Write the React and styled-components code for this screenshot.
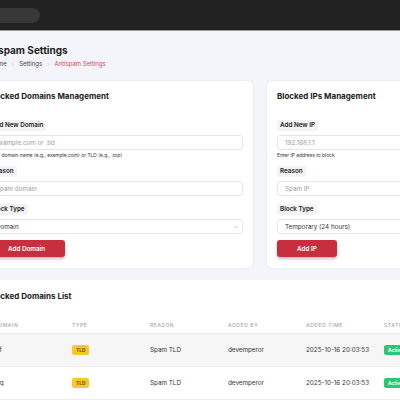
import React from 'react'
import styled, { createGlobalStyle } from 'styled-components'

const GlobalStyle = createGlobalStyle`
  html, body {
    margin: 0;
    padding: 0;
    background: #f4f5fb;
    font-family: Inter, "Noto Sans", sans-serif;
    overflow: hidden;
  }
`

const TopBar = styled.header`
  height: 30px;
  background: #222222;
  border-bottom: 1px solid #9a9a9a;
  display: flex;
  align-items: center;
`

const SearchPill = styled.div`
  width: 70px;
  height: 15px;
  margin-left: -30px;
  border-radius: 8px;
  background: #383838;
`

const Page = styled.main`
  margin-left: -22px;
  width: 700px;
  padding-top: 12px;
`

const Title = styled.h1`
  margin: 0 0 0 0;
  font-size: 10px;
  line-height: 14px;
  font-weight: 700;
  color: #1c1c1c;
`

const Crumbs = styled.nav`
  margin: 3px 0 0 12px;
  display: flex;
  align-items: center;
  gap: 5px;
  font-size: 6px;
  color: #444;
`

const Crumb = styled.span`
  color: ${p => (p.$active ? '#d2475a' : '#444')};
`

const Sep = styled.span`
  color: #c4c4c4;
  font-size: 6px;
`

const Cards = styled.div`
  margin-top: 14px;
  display: grid;
  grid-template-columns: 275px 275px;
  gap: 14px;
`

const Card = styled.section`
  background: #ffffff;
  border-radius: 6px;
  padding: 10px 10px 11px;
  box-shadow: 0 0 0 1px #eceef5;
`

const CardTitle = styled.h2`
  margin: 0;
  font-size: 8px;
  line-height: 11px;
  font-weight: 700;
  color: #1c1c1c;
`

const Field = styled.div`
  display: flex;
  flex-direction: column;
  align-items: flex-start;
  margin-top: ${p => p.$gap || 8}px;
`

const Label = styled.label`
  background: #f3f3f5;
  border-radius: 2px;
  padding: 1px 3px;
  font-size: 6.3px;
  line-height: 9px;
  font-weight: 600;
  color: #222;
  margin-bottom: 4px;
`

const Input = styled.div`
  box-sizing: border-box;
  width: 100%;
  height: 15px;
  border: 1px solid #e6e6ea;
  border-radius: 3px;
  padding: 0 3px 0 7px;
  display: flex;
  align-items: center;
  justify-content: space-between;
  font-size: 6.3px;
  color: ${p => (p.$value ? '#333' : '#9c9c9c')};
`

const Help = styled.div`
  margin-top: 2px;
  font-size: 4.9px;
  color: #333;
`

const Chevron = styled.svg`
  width: 6px;
  height: 6px;
  color: #999;
`

const Button = styled.button`
  margin-top: 6px;
  height: 17px;
  padding: 0 20px;
  border: none;
  border-radius: 3px;
  background: #c72f3e;
  color: #fff;
  font-family: inherit;
  font-size: 6.3px;
  font-weight: 600;
  box-shadow: 0 2px 3px rgba(0, 0, 0, 0.25);
`

const ListCard = styled.section`
  margin-top: 12px;
  width: 600px;
  background: #fff;
  border-radius: 6px;
  padding: 11px 10px 0;
`

const Table = styled.table`
  margin-top: 14px;
  border-collapse: collapse;
  table-layout: fixed;
  width: 468px;
`

const Th = styled.th`
  padding: 0 6px;
  height: 17px;
  text-align: left;
  font-size: 5px;
  font-weight: 500;
  letter-spacing: 0.6px;
  color: #a6a6a6;
  border-bottom: 1px solid #ececec;
  white-space: nowrap;
  vertical-align: middle;
`

const Tr = styled.tr`
  background: ${p => (p.$shade ? '#f6f6f6' : '#fff')};
`

const Td = styled.td`
  height: 32px;
  padding: 0 6px;
  font-size: 6.3px;
  color: #333;
  border-bottom: 1px solid #ececec;
  white-space: nowrap;
`

const Badge = styled.span`
  display: inline-block;
  padding: 2px 4px;
  border-radius: 2px;
  font-size: 4.8px;
  font-weight: 700;
  background: ${p => (p.$tone === 'green' ? '#2bc776' : '#f8c630')};
  color: ${p => (p.$tone === 'green' ? '#fff' : '#6b4e00')};
`

const rows = [
  { domain: '.cf', type: 'TLD', reason: 'Spam TLD', by: 'devemperor', time: '2025-10-16 20:03:53' },
  { domain: '.gq', type: 'TLD', reason: 'Spam TLD', by: 'devemperor', time: '2025-10-16 20:03:53' },
]

const SelectBox = ({ children }) => (
  <Input $value>
    <span>{children}</span>
    <Chevron viewBox="0 0 24 24" fill="none" stroke="currentColor" strokeWidth="2.5">
      <path d="M6 9l6 6 6-6" />
    </Chevron>
  </Input>
)

const App = () => {
  return (
    <>
      <GlobalStyle />
      <TopBar>
        <SearchPill />
      </TopBar>
      <Page>
        <Title>Antispam Settings</Title>
        <Crumbs>
          <Crumb>Home</Crumb>
          <Sep>›</Sep>
          <Crumb>Settings</Crumb>
          <Sep>›</Sep>
          <Crumb $active>Antispam Settings</Crumb>
        </Crumbs>

        <Cards>
          <Card>
            <CardTitle>Blocked Domains Management</CardTitle>
            <Field $gap={18}>
              <Label>Add New Domain</Label>
              <Input>example.com or .tld</Input>
              <Help>Enter domain name (e.g., example.com) or TLD (e.g., .top)</Help>
            </Field>
            <Field>
              <Label>Reason</Label>
              <Input>Spam domain</Input>
            </Field>
            <Field>
              <Label>Block Type</Label>
              <SelectBox>Domain</SelectBox>
            </Field>
            <Button>Add Domain</Button>
          </Card>

          <Card>
            <CardTitle>Blocked IPs Management</CardTitle>
            <Field $gap={18}>
              <Label>Add New IP</Label>
              <Input>192.168.1.1</Input>
              <Help>Enter IP address to block</Help>
            </Field>
            <Field>
              <Label>Reason</Label>
              <Input>Spam IP</Input>
            </Field>
            <Field>
              <Label>Block Type</Label>
              <SelectBox>Temporary (24 hours)</SelectBox>
            </Field>
            <Button>Add IP</Button>
          </Card>
        </Cards>

        <ListCard>
          <CardTitle>Blocked Domains List</CardTitle>
          <Table>
            <thead>
              <tr>
                <Th>DOMAIN</Th>
                <Th>TYPE</Th>
                <Th>REASON</Th>
                <Th>ADDED BY</Th>
                <Th>ADDED TIME</Th>
                <Th>STATUS</Th>
              </tr>
            </thead>
            <tbody>
              {rows.map((r, i) => (
                <Tr key={r.domain} $shade={i === 0}>
                  <Td>{r.domain}</Td>
                  <Td><Badge>{r.type}</Badge></Td>
                  <Td>{r.reason}</Td>
                  <Td>{r.by}</Td>
                  <Td>{r.time}</Td>
                  <Td><Badge $tone="green">Active</Badge></Td>
                </Tr>
              ))}
            </tbody>
          </Table>
        </ListCard>
      </Page>
    </>
  )
}

export default App
